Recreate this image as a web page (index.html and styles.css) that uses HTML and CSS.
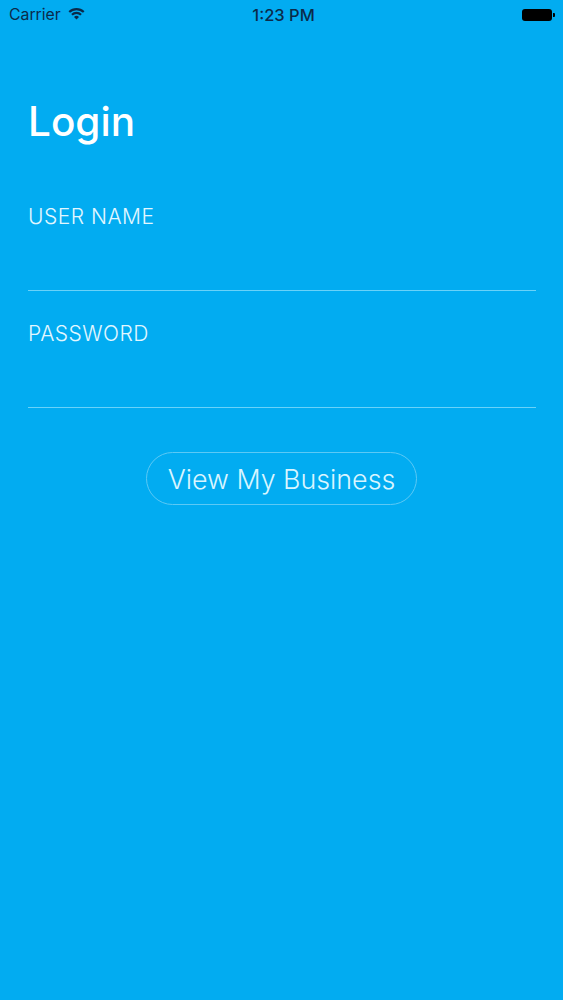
FILE: index.html
```html
<!DOCTYPE html>
<html lang="en">
<head>
  <meta charset="UTF-8">
  <title>Login</title>
  <link rel="stylesheet" href="styles.css">
</head>
<body>
  <div class="status-bar">
    <div class="status-left">
      <span>Carrier</span>
      <svg class="wifi" width="17" height="13" viewBox="0 0 17 13">
        <path d="M0.5 4.2 A11.5 11.5 0 0 1 16.5 4.2 L15 5.8 A9.4 9.4 0 0 0 2 5.8 Z" fill="#0b2a4a"/>
        <path d="M3.2 7 A7.6 7.6 0 0 1 13.8 7 L12.3 8.5 A5.5 5.5 0 0 0 4.7 8.5 Z" fill="#0b2a4a"/>
        <path d="M8.5 12.6 L6 10 A3.6 3.6 0 0 1 11 10 Z" fill="#0b2a4a"/>
      </svg>
    </div>
    <div class="status-time">1:23 PM</div>
    <div class="status-right">
      <div class="battery"></div>
      <div class="battery-tip"></div>
    </div>
  </div>

  <form class="login">
    <h1>Login</h1>
    <div class="field">
      <label>USER NAME</label>
    </div>
    <div class="field">
      <label>PASSWORD</label>
    </div>
    <div class="actions">
      <button type="button" class="submit">View My Business</button>
    </div>
  </form>
</body>
</html>
```

FILE: styles.css
```css
* {
  box-sizing: border-box;
}

html, body {
  height: 100%;
  margin: 0;
  padding: 0;
}

body {
  background-color: #02acf1;
  color: #fff;
  font-family: Inter, "Liberation Sans", Arial, sans-serif;
  overflow: hidden;
}

.status-bar {
  height: 29px;
  display: grid;
  grid-template-columns: 1fr auto 1fr;
  align-items: center;
  padding: 0 8px 0 9px;
  color: #0b2a4a;
  font-size: 15.8px;
}

.status-left {
  display: flex;
  align-items: center;
  gap: 7px;
}

.wifi {
  margin-top: -3px;
}

.status-time {
  margin-left: 3px;
  font-size: 16.5px;
  font-weight: 500;
}

.status-right {
  display: flex;
  justify-content: flex-end;
  align-items: center;
}

.battery {
  width: 30px;
  height: 12px;
  background-color: #000;
  border-radius: 3px;
}

.battery-tip {
  width: 2px;
  height: 4px;
  background-color: #000;
  margin-left: 1px;
  border-radius: 0 1px 1px 0;
}

.login {
  padding: 0 27px 0 28px;
}

h1 {
  margin: 67px 0 0;
  font-size: 40.5px;
  font-weight: 500;
  line-height: 52px;
}

.field {
  height: 117px;
  border-bottom: 1px solid #6ad2f9;
  color: #e2f7ff;
  font-size: 21px;
  font-weight: 300;
  letter-spacing: 0.5px;
  line-height: 26px;
}

.field:first-of-type {
  height: 143px;
  padding-top: 56px;
}

.field + .field {
  padding-top: 30px;
}

.actions {
  display: flex;
  justify-content: center;
  padding: 44px 1px 0 0;
}

.submit {
  width: 271px;
  height: 53px;
  background: transparent;
  border: 1px solid #5cc9f5;
  border-radius: 27px;
  color: #d8f5ff;
  font-family: Inter, "Liberation Sans", Arial, sans-serif;
  font-size: 26.8px;
  font-weight: 300;
  padding: 1px 0 0;
}
```
